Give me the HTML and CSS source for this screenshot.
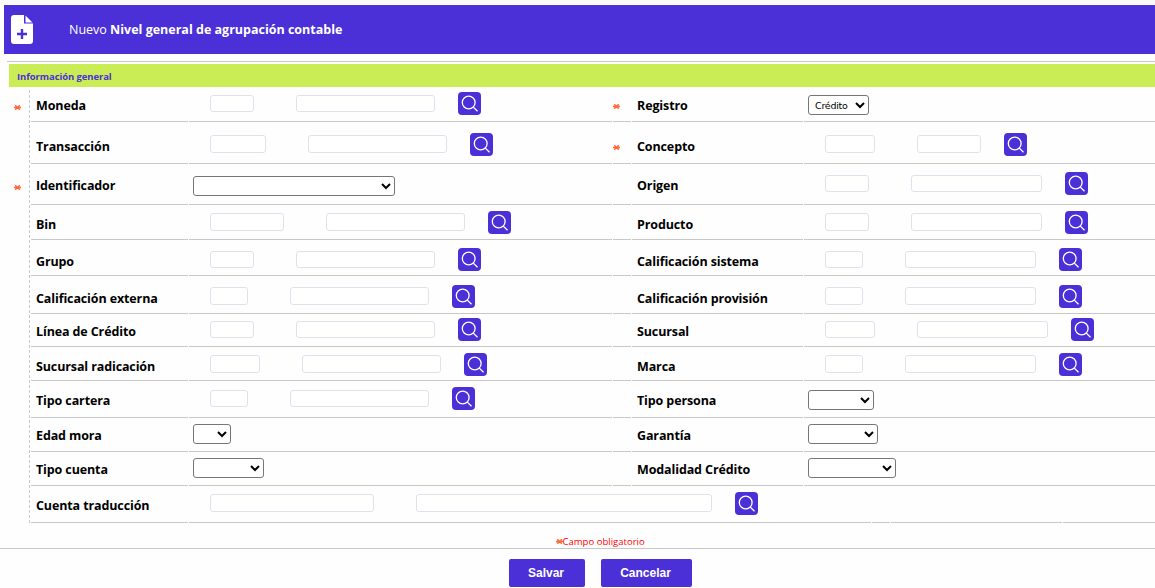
FILE: index.html
```
<!DOCTYPE html>
<html lang="es">
<head>
<meta charset="utf-8">
<title>Nivel general de agrupación contable</title>
<link rel="stylesheet" href="styles.css">
<script src="form.js" defer></script>
</head>
<body>
<header class="titlebar">
  <svg class="doc-icon" width="22" height="29" viewBox="0 0 22 29">
    <path fill="#fff" d="M3 0H13V8.5H22V26Q22 29 19 29H3Q0 29 0 26V3Q0 0 3 0ZM14.5 .5L21.5 7.5H14.5Z"/>
    <path d="M6 19H16M11 14V24" stroke="#4b30d8" stroke-width="2.4"/>
  </svg>
  <h1 class="title">Nuevo <b>Nivel general de agrupación contable</b></h1>
</header>
<main class="panel">
  <h2 class="section">Información general</h2>
  <form class="rows" id="rows"></form>
</main>
<p class="note"><svg class="star" width="7" height="7" viewBox="0 0 7 7"><path d="M0 3.5H7M1.2 1.2L5.8 5.8M5.8 1.2L1.2 5.8"/></svg><span>Campo obligatorio</span></p>
<footer class="actions">
  <button class="btn save" type="button">Salvar</button>
  <button class="btn cancel" type="button">Cancelar</button>
</footer>
</body>
</html>
```
FILE: form.js
```
const star = '<svg class="star" width="7" height="7" viewBox="0 0 7 7"><path d="M0 3.5H7M1.2 1.2L5.8 5.8M5.8 1.2L1.2 5.8"/></svg>';
const lens = '<svg width="23" height="23" viewBox="0 0 23 23"><circle cx="10.7" cy="10.5" r="6.4"/><path d="M15.3 15.1L19.5 19.3"/></svg>';

// Each field: label, control widths, required flag. One width is a select, two are a code + name lookup.
const rows = [
  { size: 'r1', left: ['Moneda', [44, 139], true], right: ['Registro', [61], true, 'Crédito'] },
  { size: 'r2', left: ['Transacción', [56, 139]], right: ['Concepto', [50, 64], true] },
  { size: 'r3', left: ['Identificador', [202], true], right: ['Origen', [44, 131]] },
  { size: 'r4', left: ['Bin', [74, 139]], right: ['Producto', [44, 131]] },
  { size: 'r5', left: ['Grupo', [44, 139]], right: ['Calificación sistema', [38, 131]] },
  { size: 'r6', left: ['Calificación externa', [38, 139]], right: ['Calificación provisión', [38, 131]] },
  { size: 'r7', left: ['Línea de Crédito', [44, 139]], right: ['Sucursal', [50, 131]] },
  { size: 'r8', left: ['Sucursal radicación', [50, 139]], right: ['Marca', [38, 131]] },
  { size: 'r9', left: ['Tipo cartera', [38, 139]], right: ['Tipo persona', [66]] },
  { size: 'r10', left: ['Edad mora', [38]], right: ['Garantía', [70]] },
  { size: 'r11', left: ['Tipo cuenta', [71]], right: ['Modalidad Crédito', [88]] },
  { size: 'r12', left: ['Cuenta traducción', [164, 296]] }
];

function control([, w, , text = '']) {
  if (w.length === 1) {
    return `<select class="pick" style="width:${w[0]}px"><option>${text}</option></select>`;
  }
  return `<div class="lookup"><input class="box" style="width:${w[0]}px"><input class="box" style="width:${w[1]}px"><button class="find" type="button" aria-label="Buscar">${lens}</button></div>`;
}

function field(f) {
  return `<div class="mark">${f && f[2] ? star : ''}</div>` +
    `<div class="cell name">${f ? `<label>${f[0]}</label>` : ''}</div>` +
    `<div class="cell value">${f ? control(f) : ''}</div>`;
}

document.getElementById('rows').innerHTML = rows
  .map(r => `<div class="row ${r.size}">${field(r.left)}${field(r.right)}</div>`)
  .join('');
```
FILE: styles.css
```
* { box-sizing: border-box; }
body {
  margin: 0;
  padding-top: 5px;
  height: 588px;
  overflow: hidden;
  background: linear-gradient(#fafafa 4px, #fefefe 4px);
  font-family: "Open Sans", "Noto Sans", sans-serif;
  color: #000;
}
.titlebar {
  display: flex;
  align-items: center;
  height: 49px;
  margin-left: 4px;
  padding-left: 7px;
  background: #4b30d8;
}
.doc-icon { margin-right: 36px; }
.title {
  margin: 0;
  color: #fff;
  font-size: 12.5px;
  font-weight: 400;
  white-space: nowrap;
}
.panel {
  margin: 7px 0 0 7px;
  padding: 2px 0 0 2px;
  border-top: 1px solid #c8c8c8;
}
.section {
  margin: 0;
  height: 23px;
  padding-left: 8px;
  background: #caed55;
  color: #4b30d8;
  font-size: 9.5px;
  font-weight: 700;
  line-height: 25px;
  letter-spacing: -0.1px;
}
.rows {
  background: repeating-linear-gradient(#c8c8c8 0 3px, transparent 3px 5px) 20px 3px / 1px 433px no-repeat;
}
.row {
  display: grid;
  grid-template-columns: 21px 157px 423px 18px 171px 1fr;
  column-gap: 1px;
  height: var(--h);
}
.row > div { border-bottom: 1px solid #c8c8c8; }
.row > .mark:first-child { border: 0; padding-left: 5px; padding-top: calc(var(--text) + 8px); }
.mark { padding-top: calc(var(--text) + 7px); line-height: 0; }
.star { fill: none; stroke: #ff6a38; stroke-width: 1.5; }
.name {
  padding: calc(var(--text) + 1px) 0 0 5px;
  font-size: 12.5px;
  font-weight: 700;
  line-height: 18px;
  letter-spacing: -0.12px;
  white-space: nowrap;
}
.value { display: flex; align-items: flex-start; }
.lookup { display: flex; padding: var(--icon) 0 0 21px; }
.box {
  height: var(--box, 17px);
  margin: var(--drop, 3px) 42px 0 0;
  padding: 0 3px;
  border: 1px solid #e1e1eb;
  border-radius: 3px;
  background: #fff;
}
.box + .box { margin-right: 23px; }
.find {
  width: 23px;
  height: 23px;
  padding: 0;
  border: 0;
  border-radius: 4px;
  background: #4b30d8;
}
.find svg { display: block; fill: none; stroke: #fff; stroke-width: 1.3; }
.pick {
  height: 20px;
  margin: var(--select) 0 0 4px;
  padding: 0 0 0 2px;
  border: 1px solid #767676;
  border-radius: 3px;
  background: #fff;
  color: #000;
  font: 9.5px "DejaVu Sans", sans-serif;
  letter-spacing: -0.25px;
}
.r1 { --h: 35px; --icon: 5px; --text: 9px; --select: 8px; }
.r2 { --h: 42px; --icon: 11px; --text: 15px; --box: 18px; --drop: 2px; }
.r3 { --h: 41px; --icon: 8px; --text: 12px; --select: 12px; }
.r4 { --h: 35px; --icon: 6px; --text: 10px; --box: 18px; --drop: 2px; }
.r5 { --h: 36px; --icon: 8px; --text: 12px; }
.r6 { --h: 38px; --icon: 9px; --text: 13px; --box: 18px; --drop: 2px; }
.r7 { --h: 33px; --icon: 4px; --text: 8px; }
.r8 { --h: 34px; --icon: 6px; --text: 10px; --box: 18px; --drop: 2px; }
.r9 { --h: 37px; --icon: 6px; --text: 10px; --select: 9px; }
.r10 { --h: 34px; --text: 8px; --select: 6px; }
.r11 { --h: 34px; --text: 8px; --select: 6px; }
.r12 { --h: 37px; --icon: 6px; --text: 10px; --box: 18px; --drop: 2px; grid-template-columns: 21px 157px 682px 18px 171px 1fr; }
.note {
  display: flex;
  align-items: center;
  height: 26px;
  margin: 0;
  padding: 12px 0 0 556px;
  border-bottom: 1px solid #c8c8c8;
  color: #f00;
  font-size: 9.5px;
  line-height: 13px;
  letter-spacing: 0.02px;
  white-space: nowrap;
}
.note .star { margin-right: -0.5px; }
.actions {
  display: flex;
  gap: 16px;
  padding: 10px 0 0 509px;
}
.btn {
  height: 28px;
  padding: 0 2px 0 0;
  border: 0;
  border-radius: 2px;
  background: #4b30d8;
  color: #fff;
  font: bold 12px "Liberation Sans", sans-serif;
}
.save { width: 76px; }
.cancel { width: 91px; }
```
